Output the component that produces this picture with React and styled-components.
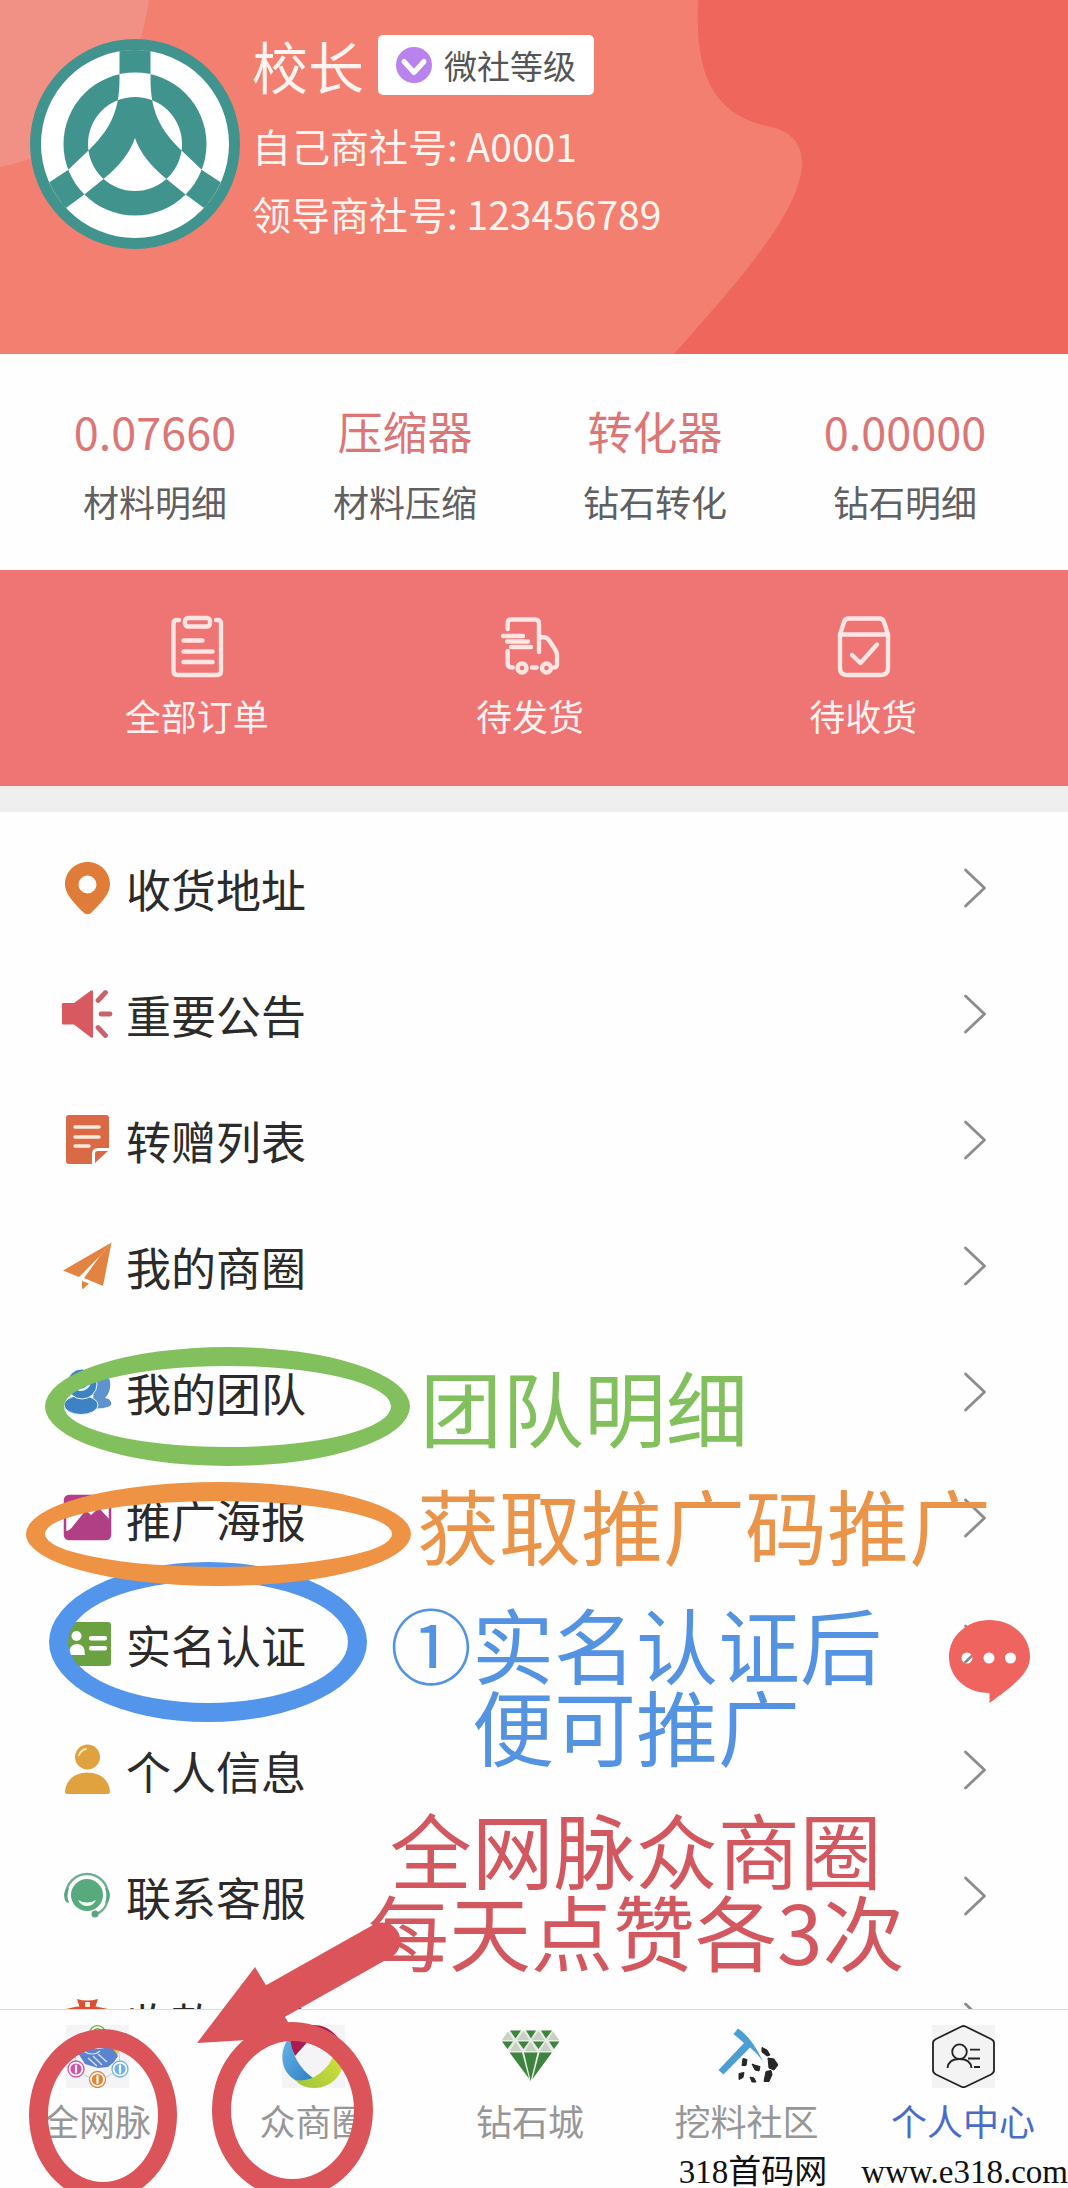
import React from "react";
import styled, { createGlobalStyle } from "styled-components";

const GlobalStyle = createGlobalStyle`
  * { box-sizing: border-box; }
  body {
    margin: 0;
    background: #fefefe;
    font-family: "Noto Sans CJK SC", "Noto Sans", sans-serif;
    color: #2b2b2b;
  }
  a { color: inherit; text-decoration: none; }
`;

const Page = styled.div`
  position: relative;
  display: flex;
  flex-direction: column;
  height: 100vh;
  overflow: hidden;
`;

/* ---------- profile header ---------- */

const Header = styled.header`
  position: relative;
  flex: none;
  display: flex;
  align-items: center;
  gap: 12px;
  padding: 35px 30px 101px;
  background: #f27f70;
  color: #fff4f0;
`;

const HeaderShapes = styled.svg`
  position: absolute;
  inset: 0;
  width: 100%;
  height: 100%;
`;

const Avatar = styled.svg`
  position: relative;
  flex: none;
  width: 210px;
  height: 210px;
`;

const Profile = styled.div`
  position: relative;
  padding-bottom: 6px;
`;

const NameRow = styled.div`
  display: flex;
  align-items: center;
  gap: 14px;
  height: 60px;
  margin-bottom: 16px;
`;

const Name = styled.h1`
  margin: 0;
  font-size: 56px;
  font-weight: 400;
  line-height: 60px;
`;

const LevelBadge = styled.button`
  display: flex;
  align-items: center;
  gap: 12px;
  height: 60px;
  padding: 0 18px;
  border: 0;
  border-radius: 5px;
  background: #fff;
  color: #555;
  font-family: inherit;
  font-size: 33px;
`;

const InfoLine = styled.p`
  margin: 0;
  font-size: 39px;
  line-height: 68px;
`;

/* ---------- stats and orders ---------- */

const Stats = styled.nav`
  flex: none;
  display: grid;
  grid-template-columns: repeat(4, 1fr);
  padding: 41px 38px 33px 30px;
  text-align: center;
`;

const Stat = styled.a`
  display: flex;
  flex-direction: column;
  line-height: 71px;
`;

const StatValue = styled.span`
  font-size: 45px;
  color: #dc7676;
`;

const StatLabel = styled.span`
  font-size: 36px;
  color: #606060;
`;

const Orders = styled.nav`
  flex: none;
  display: grid;
  grid-template-columns: repeat(3, 1fr);
  padding: 44px 38px 46px 30px;
  background: #ef7474;
`;

const Order = styled.a`
  display: flex;
  flex-direction: column;
  align-items: center;
  gap: 12px;
  font-size: 36px;
  line-height: 50px;
  color: #fff2f0;
`;

const OrderIcon = styled.svg`
  width: 64px;
  height: 64px;
  fill: none;
  stroke: #ffe6e3;
  stroke-width: 4.4;
  stroke-linecap: round;
  stroke-linejoin: round;
`;

const Divider = styled.div`
  flex: none;
  height: 26px;
  background: #efefef;
`;

/* ---------- menu ---------- */

const Menu = styled.main`
  flex: 1;
  min-height: 0;
  overflow: hidden;
  padding-top: 13px;
`;

const MenuRow = styled.a`
  display: flex;
  align-items: center;
  gap: 12px;
  height: 126px;
  padding: 0 81px 0 60px;
  font-size: 45px;
`;

const MenuIcon = styled.svg`
  flex: none;
  width: 54px;
  height: 54px;
`;

const MenuLabel = styled.span`
  flex: 1;
`;

const ChevronIcon = styled.svg`
  flex: none;
  width: 24px;
  height: 42px;
  fill: none;
  stroke: #8c8c8c;
  stroke-width: 2.8;
  stroke-linecap: round;
  stroke-linejoin: round;
`;

/* ---------- tab bar ---------- */

const TabBar = styled.nav`
  flex: none;
  display: flex;
  justify-content: space-between;
  height: 179px;
  padding: 15px 33px 0 25px;
  border-top: 1px solid #dcdcdc;
  background: #fefefe;
`;

const Tab = styled.a`
  display: flex;
  flex-direction: column;
  align-items: center;
  gap: 6px;
  width: 144px;
  font-size: 36px;
  line-height: 52px;
  color: ${(p) => (p.$active ? "#4a6bc8" : "#979797")};
`;

const TabIcon = styled.svg`
  width: 63px;
  height: 63px;
`;

/* ---------- marks drawn over the screen ---------- */

const Overlay = styled.div`
  position: absolute;
  inset: 0;
  overflow: hidden;
  pointer-events: none;
`;

const Ring = styled.div`
  position: absolute;
  left: ${(p) => p.$x}px;
  top: ${(p) => p.$y}px;
  width: ${(p) => p.$w}px;
  height: ${(p) => p.$h}px;
  border: 19px solid ${(p) => p.$color};
  border-radius: 50%;
`;

const Note = styled.p`
  position: absolute;
  left: ${(p) => p.$x}px;
  top: ${(p) => p.$y}px;
  margin: 0;
  font-size: 82px;
  line-height: 82px;
  text-align: center;
  white-space: nowrap;
  color: ${(p) => p.$color};
`;

const Arrow = styled.svg`
  position: absolute;
  left: 190px;
  top: 1910px;
  width: 220px;
  height: 140px;
  fill: #db5459;
  stroke: #db5459;
`;

const ChatButton = styled.button`
  position: absolute;
  left: 948px;
  top: 1619px;
  width: 83px;
  height: 86px;
  padding: 0;
  border: 0;
  background: none;
`;

const Watermark = styled.footer`
  position: absolute;
  right: 0;
  bottom: 0;
  display: flex;
  gap: 34px;
  font-family: "Liberation Serif", "Noto Sans CJK SC", serif;
  font-size: 33px;
  line-height: 32px;
  color: #111;
`;

/* ---------- drawings ---------- */

const AvatarLogo = () => (
  <Avatar viewBox="0 0 210 210" role="img" aria-label="头像">
    <circle cx="105" cy="105" r="105" fill="#41948e" />
    <path
      fill="#fff"
      fillRule="evenodd"
      d="M11 105a94 94 0 1 0 188 0a94 94 0 1 0 -188 0z
         M33.500 105a71.500 71.500 0 1 0 143 0a71.500 71.500 0 1 0 -143 0z
         M58 105a47 47 0 1 0 94 0a47 47 0 1 0 -94 0z
         M89.500 12.300V40C89.500 75 78 92 59 111L38 131L19 143.500A94 94 0 0 0 36 169L55 155L73.500 140Q98 120 105 99Q112 120 136.500 140L155 155L174 169A94 94 0 0 0 191 143.500L172 131L151 111C132 92 120.500 75 120.500 40V12.300A94 94 0 0 0 89.500 12.300z"
    />
  </Avatar>
);

const ICONS = {
  pin: (
    <path
      fill="#e07c39"
      fillRule="evenodd"
      d="M27.500 1C15 1 5 11 5 23c0 9 6 16 19 29q3.500 2.500 7 0C44 39 50 32 50 23C50 11 40 1 27.500 1zM27.500 14.500a9 9 0 1 1 0 18a9 9 0 0 1 0-18z"
    />
  ),
  horn: (
    <g fill="#d85a60">
      <path d="M3 16h11L31 3.500q2-1 2 1v45q0 2-2 1L14 37.500H3q-1 0-1-1V17q0-1 1-1z" />
      <path d="M38 13.500l7.500-8M41 27h9M38 40.500l7.500 8" stroke="#c9636a" strokeWidth="4.800" strokeLinecap="round" />
    </g>
  ),
  note: (
    <g fill="#d96a45">
      <path d="M9 2h37q3 0 3 3v30H38q-6 0-6 6v10H9q-3 0-3-3V5q0-3 3-3z" />
      <path d="M35 50V41q0-3 3-3h10z" />
      <path d="M15 14h24M15 24h24M15 33h14" stroke="#ffe9dd" strokeWidth="3.500" strokeLinecap="round" />
    </g>
  ),
  plane: (
    <g fill="#e28341">
      <path d="M51.500 3.500L3 31.500l16 6.500L40 17z" />
      <path d="M51.500 3.500L43 47L24 39L40 17z" />
      <path d="M22 42l7 2.500l-6 5.500q-1 0-1-1z" />
    </g>
  ),
  team: (
    <g>
      <path d="M34 7c10-3 18 5 16 16c-1 5-3 8-5 10c5 1 7 4 6 7c-3 3-12 4-18 3z" fill="#5f93cf" />
      <g fill="#3d82c4" stroke="#eaf4ff" strokeWidth="1">
        <ellipse cx="21" cy="40" rx="17" ry="9.500" />
        <circle cx="22" cy="19" r="15" />
      </g>
      <path d="M14 21q8 8 15-1" fill="none" stroke="#e4f1ff" strokeWidth="2.600" strokeLinecap="round" />
    </g>
  ),
  poster: (
    <g>
      <rect x="5" y="5" width="45" height="43" rx="4" fill="#fff" stroke="#b53d8b" strokeWidth="2.500" />
      <path d="M6 6h43v6H6z" fill="#b53d8b" />
      <path d="M5 40q5 0 8-5l13-16l5 5l8-7l11 12v15q0 4-4 4H9q-4 0-4-4z" fill="#b03f86" />
    </g>
  ),
  card: (
    <g>
      <rect x="4" y="5" width="47" height="44" rx="3" fill="#6aa242" />
      <g fill="#fff">
        <circle cx="16.500" cy="19" r="5" />
        <path d="M9 38q0-11 8-11q8 0 8 11z" />
        <rect x="29" y="19" width="18" height="4.500" rx="2" />
        <rect x="29" y="29" width="18" height="4.500" rx="2" />
      </g>
    </g>
  ),
  person: (
    <g fill="#e0a23f">
      <circle cx="27.500" cy="14" r="12.500" />
      <path d="M5 48C6 37 15 29.500 27.500 29.500S49 37 50 48q0 3-2 3H7q-2 0-2-3z" />
      <path d="M19 12q2-5 7-6" fill="none" stroke="#ffe9c0" strokeWidth="2" strokeLinecap="round" />
    </g>
  ),
  service: (
    <g>
      <circle cx="27" cy="26" r="16" fill="#58aa7d" />
      <path d="M6 26a21 21 0 0 1 42 0c0 10-5 17-13 19.500" fill="none" stroke="#6fae8e" strokeWidth="2.400" />
      <path d="M6 20q-4 6 0 13l3 1q-3-7 0-15zM48 20q4 6 0 13l-3 1q3-7 0-15z" fill="#58a580" />
      <circle cx="35" cy="45" r="3.500" fill="#58a580" />
      <path d="M18 31q9 5 18 0q-3 6-9 6t-9-6z" fill="#f3fff8" />
    </g>
  ),
  money: (
    <g fill="#dc4f30">
      <path d="M17 4q10 3 21 0l-3 9H20z" />
      <path d="M6 14q20-6 42 0v36H6z" />
      <path d="M25 7h5v5h-5z" fill="#fff3e6" />
    </g>
  ),
};

const ORDER_ICONS = {
  all: (
    <>
      <path d="M14 6h-2q-3.500 0-3.500 3.500V57q0 4 4 4h39.500q4 0 4-4V9.500Q56 6 52.500 6H51" />
      <rect x="20" y="4" width="25" height="8.500" rx="3" />
      <path d="M18.500 26.500h19M18.500 37.500h29M18.500 48h29" />
    </>
  ),
  truck: (
    <>
      <path d="M9.700 15V9q0-3.500 3.500-3.500H37q4 0 4 4V38M9.700 37v13q0 3.500 5 3.500" />
      <path d="M5 22h20M9 27.500h21M13 33h20" />
      <path d="M42 23.300h4q3 0 5 3l6 9q2 3 2 6V50q0 3.500-3 3.500" />
      <circle cx="24" cy="54" r="4.500" />
      <circle cx="48.500" cy="54" r="4.500" />
      <path d="M34 53.500h4.500" />
    </>
  ),
  box: (
    <>
      <path d="M9 20.500L13 8q1-3.500 5-3.500h30q4 0 5 3.500l4 12.500V54q0 7-7 7H16q-7 0-7-7z" />
      <path d="M9 20.500h48M21 41l8.500 8L46 30.500" />
    </>
  ),
};

const coin = (cx, cy, color) => (
  <g>
    <circle cx={cx} cy={cy} r="8" fill="#fff" stroke={color} strokeWidth="1.300" />
    <circle cx={cx} cy={cy} r="5.600" fill={color} />
    <path d={`M${cx} ${cy - 3.5}v7`} stroke="#fff" strokeWidth="2.200" strokeLinecap="round" />
  </g>
);

const TAB_ICONS = {
  network: (
    <>
      <path d="M0 0h63v63H0z" fill="#f4f4f6" />
      <circle cx="31.500" cy="32" r="22" fill="none" stroke="#c8ccd4" strokeWidth="1" />
      {coin(31.5, 8.7, "#61b34a")}
      <path d="M45 22l9 1l-3 8z" fill="#f0c24a" />
      <path d="M12 28l7-6l13 2l14-2l6 9l-4 6l-6 5l-10 1l-13-4z" fill="#5b83cf" />
      <path d="M22 33l9 8M27 31l9 9M32 29l9 8M17 26q10 6 17 0" stroke="#dbe7fb" strokeWidth="1.200" fill="none" />
      {coin(10, 44, "#d451a5")}
      {coin(54, 44, "#6fb1e0")}
      {coin(31.5, 54.5, "#e58330")}
    </>
  ),
  circle: (
    <>
      <defs>
        <linearGradient id="swirl-blue" x1="0" y1="0" x2="1" y2="1">
          <stop offset="0" stopColor="#68b4e6" />
          <stop offset="1" stopColor="#2c7fc4" />
        </linearGradient>
        <linearGradient id="swirl-lime" x1="0" y1="1" x2="1" y2="0">
          <stop offset="0" stopColor="#9fc43a" />
          <stop offset="1" stopColor="#dbe63a" />
        </linearGradient>
      </defs>
      <path d="M0 0h63v63H0z" fill="#f4f4f6" />
      <path d="M24 1C40-3 55 6 61 22L42 15L28 14L13 31L6 16Q12 4 24 1z" fill="#a81c4f" />
      <path d="M8 11C-5 28-1 50 17 57Q24 60 31 53Q10 38 8 11z" fill="url(#swirl-blue)" />
      <path d="M60 21C67 42 54 63 32 63Q20 63 13 55Q26 57 37 49Q50 39 52 28z" fill="url(#swirl-lime)" />
    </>
  ),
  gem: (
    <>
      <path d="M11 5.500h42l7.500 10l-29 41.500L2.500 15.500z" fill="#e6ebe3" />
      <g fill="#c9cfc4">
        <path d="M3 15l6-8.500l5 8.500zM18 15l6.500-9l6 9zM33 15l6.500-9l6 9zM49 15l5-8.500l6 8.500z" />
        <path d="M11 26l5.500-9l6 9zM26 26l5.500-9l6 9zM41 26l5.500-9l6 9z" />
      </g>
      <g fill="#3f8340">
        <path d="M11 5.500h11l-5.500 8zM27 5.500h10l-5 8zM42 5.500h11l-6 8z" />
        <path d="M3 16.500h11l-5.500 7.500zM19 16.500h11l-5.500 7.500zM34 16.500h11l-5.500 7.500zM50 16.500h10.500L55 24z" />
        <path d="M10.500 27.500h12.500l7 26zM25 27.500h13.500L31.700 56zM40.500 27.500H53L33.500 54z" />
      </g>
    </>
  ),
  pick: (
    <>
      <path d="M18.500 9l4.500-5.500q14 9 25 33Q42 28 35 22.500L8.500 49.500L3.500 45L29 18z" fill="#4d9fd3" />
      <g fill="#262626" stroke="#262626" strokeWidth="1" strokeLinejoin="round">
        <path d="M47 22.500l5 2.500l3 5l-3 1l-5-4z" />
        <path d="M28 33.500l4 1l-1 6l-4 0z" />
        <path d="M37 39l4 1.500l4 1l-1 4.500l-4-1z" />
        <path d="M53 33l6 1l4 6l-4 5l-5-2z" />
        <path d="M24 48.500l5-1l-1 5l-4 2z" />
        <path d="M35 52l4 1l2 4l-4 0z" />
        <path d="M51 46.500l5-1l1 4l-3 7l-5 0z" />
      </g>
    </>
  ),
  me: (
    <>
      <path d="M0 0h63v63H0z" fill="#f3f3f3" />
      <g fill="none" stroke="#232323" strokeWidth="1.800" strokeLinejoin="round">
        <path d="M29.500 1.500q2-1 4 0l25.500 12.500q3 1.500 3 4V45q0 3-3 4.500L33.500 61.700q-2 1-4 0L4 49.500q-3-1.500-3-4.500V18q0-2.500 3-4z" />
        <circle cx="27.500" cy="26.700" r="7.300" />
        <path d="M15.500 43q1-9 12-9t12 9M38 24.700h10M36 33.500h12M42 42h6" />
      </g>
    </>
  ),
};

const STATS = [
  ["0.07660", "材料明细"],
  ["压缩器", "材料压缩"],
  ["转化器", "钻石转化"],
  ["0.00000", "钻石明细"],
];

const ORDERS = [
  ["all", "全部订单"],
  ["truck", "待发货"],
  ["box", "待收货"],
];

const MENU = [
  ["pin", "收货地址"],
  ["horn", "重要公告"],
  ["note", "转赠列表"],
  ["plane", "我的商圈"],
  ["team", "我的团队"],
  ["poster", "推广海报"],
  ["card", "实名认证"],
  ["person", "个人信息"],
  ["service", "联系客服"],
  ["money", "收款方式"],
];

const TABS = [
  ["network", "全网脉"],
  ["circle", "众商圈"],
  ["gem", "钻石城"],
  ["pick", "挖料社区"],
  ["me", "个人中心"],
];

export default function App() {
  return (
    <Page>
      <GlobalStyle />
      <Header>
        <HeaderShapes viewBox="0 0 1068 354" preserveAspectRatio="none" aria-hidden="true">
          <path d="M0 0H149C138 70 110 145 0 167z" fill="#f19085" />
          <path
            d="M698 0C696 60 704 112 767 126C800 132 808 155 798 185C784 228 740 280 674 354H1068V0z"
            fill="#ef665d"
          />
        </HeaderShapes>
        <AvatarLogo />
        <Profile>
          <NameRow>
            <Name>校长</Name>
            <LevelBadge type="button">
              <svg width="36" height="36" viewBox="0 0 36 36" aria-hidden="true">
                <circle cx="18" cy="18" r="18" fill="#b983ee" />
                <path
                  d="M8 14.500L18 25.500L28 14.500"
                  fill="none"
                  stroke="#fff"
                  strokeWidth="5"
                  strokeLinecap="round"
                  strokeLinejoin="round"
                />
              </svg>
              微社等级
            </LevelBadge>
          </NameRow>
          <InfoLine>自己商社号: A0001</InfoLine>
          <InfoLine>领导商社号: 123456789</InfoLine>
        </Profile>
      </Header>

      <Stats>
        {STATS.map(([value, label]) => (
          <Stat href="#" key={label}>
            <StatValue>{value}</StatValue>
            <StatLabel>{label}</StatLabel>
          </Stat>
        ))}
      </Stats>

      <Orders>
        {ORDERS.map(([icon, label]) => (
          <Order href="#" key={icon}>
            <OrderIcon viewBox="0 0 64 64" aria-hidden="true">
              {ORDER_ICONS[icon]}
            </OrderIcon>
            {label}
          </Order>
        ))}
      </Orders>
      <Divider />

      <Menu>
        {MENU.map(([icon, label]) => (
          <MenuRow href="#" key={icon}>
            <MenuIcon viewBox="0 0 54 54" aria-hidden="true">
              {ICONS[icon]}
            </MenuIcon>
            <MenuLabel>{label}</MenuLabel>
            <ChevronIcon viewBox="0 0 24 42" aria-hidden="true">
              <path d="M2.500 3L21.500 21L2.500 39" />
            </ChevronIcon>
          </MenuRow>
        ))}
      </Menu>

      <TabBar>
        {TABS.map(([icon, label]) => (
          <Tab href="#" key={icon} $active={icon === "me"}>
            <TabIcon viewBox="0 0 63 63" aria-hidden="true">
              {TAB_ICONS[icon]}
            </TabIcon>
            {label}
          </Tab>
        ))}
      </TabBar>

      <ChatButton type="button" aria-label="在线聊天">
        <svg width="83" height="86" viewBox="0 0 83 86" aria-hidden="true">
          <path
            fill="#ef645f"
            fillRule="evenodd"
            d="M41.500 1C64 1 82 17 82 38C82 54 66 66 41.500 84V74C18 74 1 58 1 38C1 17 19 1 41.500 1z
               M13.500 39a5.500 5.500 0 1 0 11 0a5.500 5.500 0 1 0 -11 0z
               M35.500 39a5.500 5.500 0 1 0 11 0a5.500 5.500 0 1 0 -11 0z
               M57 39a5.500 5.500 0 1 0 11 0a5.500 5.500 0 1 0 -11 0z"
          />
        </svg>
      </ChatButton>

      <Overlay>
        <Ring $x={49} $y={1562} $w={318} $h={160} $color="#5295ea" />
        <Ring $x={45} $y={1347} $w={365} $h={119} $color="#82c05d" />
        <Ring $x={26} $y={1482} $w={385} $h={104} $color="#ee9244" />
        <Ring $x={29} $y={2029} $w={148} $h={172} $color="#db5459" />
        <Ring $x={212} $y={2022} $w={161} $h={176} $color="#db5459" />
        <Note $x={420} $y={1365} $color="#82c05d">
          团队明细
        </Note>
        <Note $x={417} $y={1483} $color="#ea9449">
          获取推广码推广
        </Note>
        <Note $x={390} $y={1602} $color="#5493e2">
          ①实名认证后
          <br />
          便可推广
        </Note>
        <Note $x={367} $y={1807} $color="#d3575e">
          全网脉众商圈
          <br />
          每天点赞各3次
        </Note>
        <Arrow viewBox="0 0 220 140" aria-hidden="true">
          <path d="M192 31L82 93" strokeWidth="37" strokeLinecap="round" />
          <path d="M7 133L65 57L107 127z" stroke="none" />
        </Arrow>
      </Overlay>

      <Watermark>
        <span>318首码网</span>
        <span>www.e318.com</span>
      </Watermark>
    </Page>
  );
}
